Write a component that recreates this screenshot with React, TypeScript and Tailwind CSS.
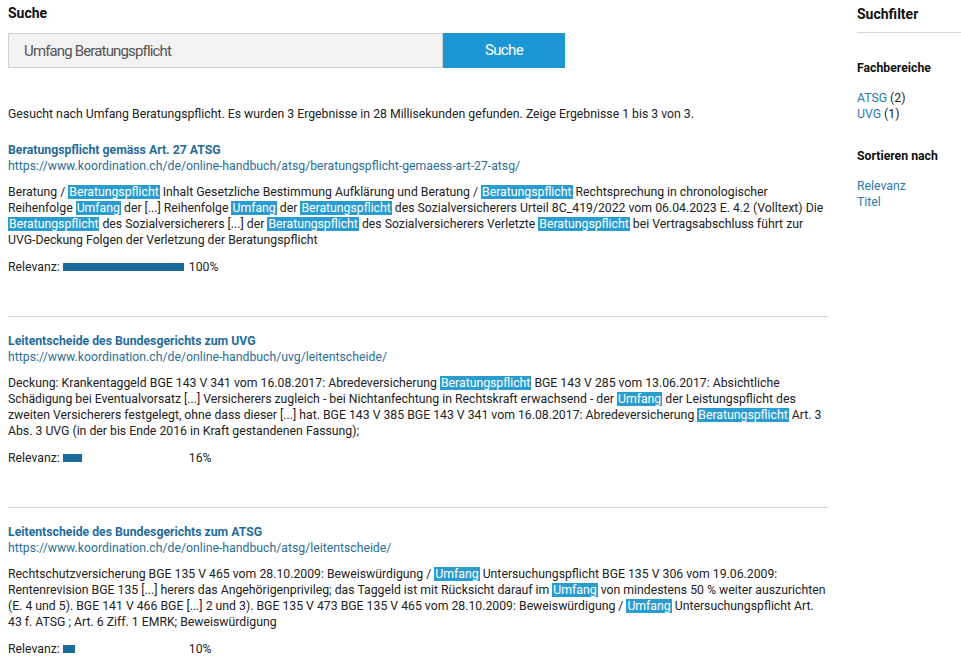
import React from "react";

type Seg = string | { h: string };

const H = ({ children }: { children: React.ReactNode }) => (
  <span className="bg-[#2a9dd0] text-white px-[1px]">{children}</span>
);

function Para({ segs }: { segs: Seg[] }) {
  return (
    <p className="mt-[9px] text-[12.25px] leading-4 text-[#222]">
      {segs.map((s, i) =>
        typeof s === "string" ? <React.Fragment key={i}>{s}</React.Fragment> : <H key={i}>{s.h}</H>
      )}
    </p>
  );
}

const B = { h: "Beratungspflicht" };
const U = { h: "Umfang" };

const results: { title: string; url: string; segs: Seg[]; rel: number }[] = [
  {
    title: "Beratungspflicht gemäss Art. 27 ATSG",
    url: "https://www.koordination.ch/de/online-handbuch/atsg/beratungspflicht-gemaess-art-27-atsg/",
    segs: [
      "Beratung / ",
      B,
      " Inhalt Gesetzliche Bestimmung Aufklärung und Beratung / ",
      B,
      " Rechtsprechung in chronologischer Reihenfolge ",
      U,
      " der [...] Reihenfolge ",
      U,
      " der ",
      B,
      " des Sozialversicherers Urteil 8C_419/2022 vom 06.04.2023 E. 4.2 (Volltext) Die ",
      B,
      " des Sozialversicherers [...] der ",
      B,
      " des Sozialversicherers Verletzte ",
      B,
      " bei Vertragsabschluss führt zur UVG-Deckung Folgen der Verletzung der Beratungspflicht",
    ],
    rel: 100,
  },
  {
    title: "Leitentscheide des Bundesgerichts zum UVG",
    url: "https://www.koordination.ch/de/online-handbuch/uvg/leitentscheide/",
    segs: [
      "Deckung: Krankentaggeld BGE 143 V 341 vom 16.08.2017: Abredeversicherung ",
      B,
      " BGE 143 V 285 vom 13.06.2017: Absichtliche Schädigung bei Eventualvorsatz [...] Versicherers zugleich - bei Nichtanfechtung in Rechtskraft erwachsend - der ",
      U,
      " der Leistungspflicht des zweiten Versicherers festgelegt, ohne dass dieser [...] hat. BGE 143 V 385 BGE 143 V 341 vom 16.08.2017: Abredeversicherung ",
      B,
      " Art. 3 Abs. 3 UVG (in der bis Ende 2016 in Kraft gestandenen Fassung);",
    ],
    rel: 16,
  },
  {
    title: "Leitentscheide des Bundesgerichts zum ATSG",
    url: "https://www.koordination.ch/de/online-handbuch/atsg/leitentscheide/",
    segs: [
      "Rechtschutzversicherung BGE 135 V 465 vom 28.10.2009: Beweiswürdigung / ",
      U,
      " Untersuchungspflicht BGE 135 V 306 vom 19.06.2009: Rentenrevision BGE 135 [...] herers das Angehörigenprivileg; das Taggeld ist mit Rücksicht darauf im ",
      U,
      " von mindestens 50 % weiter auszurichten (E. 4 und 5). BGE 141 V 466 BGE [...] 2 und 3). BGE 135 V 473 BGE 135 V 465 vom 28.10.2009: Beweiswürdigung / ",
      U,
      " Untersuchungspflicht Art. 43 f. ATSG ; Art. 6 Ziff. 1 EMRK; Beweiswürdigung",
    ],
    rel: 10,
  },
];

export default function App() {
  return (
    <div className="flex w-[961px] h-[660px] overflow-hidden bg-white font-['Roboto',sans-serif] text-[#222]">
      <main className="w-[820px] ml-[8px] pt-[3px]">
        <h2 className="text-[14px] leading-5 font-bold text-[#111]">Suche</h2>
        <div className="flex mt-[10px] items-stretch">
          <input
            readOnly
            value="Umfang Beratungspflicht"
            className="w-[435px] h-[35px] bg-[#f2f2f2] border border-[#d0d0d0] pl-[15px] text-[15px] tracking-[-0.85px] text-[#555] outline-none font-['Roboto',sans-serif]"
          />
          <button className="w-[122px] h-[35px] bg-[#1b97d5] text-white text-[15px] tracking-[-0.6px]">
            Suche
          </button>
        </div>
        <p className="mt-[38px] text-[12.25px] leading-4">
          Gesucht nach Umfang Beratungspflicht. Es wurden 3 Ergebnisse in 28 Millisekunden gefunden. Zeige
          Ergebnisse 1 bis 3 von 3.
        </p>
        <div className="mt-[20px]">
          {results.map((r, i) => (
            <div key={i}>
              {i > 0 && <div className="h-px bg-[#d6d6d6] mt-[41px] mb-[16px]" />}
              <h3 className="text-[12.25px] leading-4 font-bold text-[#1f6c9b]">{r.title}</h3>
              <div className="text-[12.25px] leading-[17px] text-[#2b6e97]">{r.url}</div>
              <Para segs={r.segs} />
              <div className="mt-[11px] flex items-center text-[12.25px] leading-4">
                <span>Relevanz:</span>
                <div className="ml-[3px] w-[121px] h-[8px]">
                  <div className="h-full bg-[#1a6a9a]" style={{ width: `${r.rel}%` }} />
                </div>
                <span className="ml-[5px]">{r.rel}%</span>
              </div>
            </div>
          ))}
        </div>
      </main>
      <aside className="ml-[29px] w-[104px] pt-[4px]">
        <h2 className="text-[14px] leading-5 font-bold text-[#111]">Suchfilter</h2>
        <div className="h-px bg-[#d6d6d6] mt-[8px]" />
        <h3 className="mt-[27px] text-[12.25px] leading-4 font-bold text-[#111]">Fachbereiche</h3>
        <ul className="mt-[14px] text-[12.25px] leading-4">
          <li>
            <span className="text-[#2b7bb0]">ATSG</span> (2)
          </li>
          <li>
            <span className="text-[#2b7bb0]">UVG</span> (1)
          </li>
        </ul>
        <h3 className="mt-[26px] text-[12.25px] leading-4 font-bold text-[#111]">Sortieren nach</h3>
        <ul className="mt-[14px] text-[12.25px] leading-4 text-[#2b7bb0]">
          <li>Relevanz</li>
          <li>Titel</li>
        </ul>
      </aside>
    </div>
  );
}
